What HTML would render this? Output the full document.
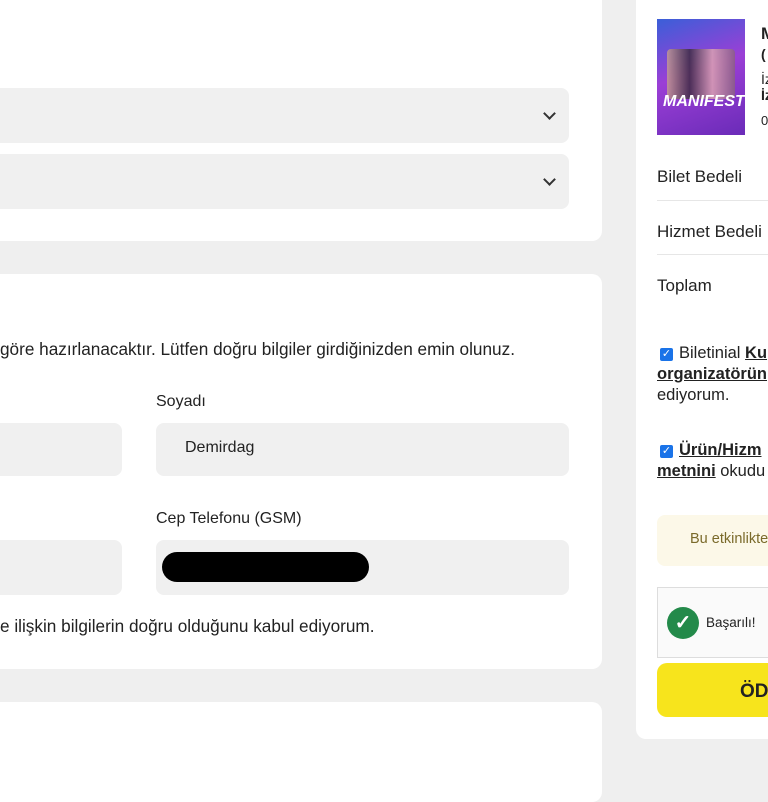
<!DOCTYPE html>
<html><head><meta charset="utf-8"><style>
body{margin:0;width:768px;height:768px;background:#efefef;font-family:"Liberation Sans",Roboto,sans-serif;position:relative;overflow:hidden;color:#222}
.card{position:absolute;background:#fff;border-radius:10px}
.in{position:absolute;background:#f0f0f0;border-radius:8px}
.t{position:absolute;white-space:nowrap}
.chev{position:absolute;width:7px;height:7px;border-right:2px solid #333;border-bottom:2px solid #333;transform:rotate(45deg)}
.cb{display:inline-block;width:13px;height:13px;background:#1a73e8;border-radius:2px;color:#fff;font-size:11px;line-height:13px;text-align:center;vertical-align:1px;margin-right:6px}
hr{position:absolute;border:0;border-top:1px solid #e6e6e6;margin:0}
</style></head><body>
<div class="card" style="left:-20px;top:-20px;width:622px;height:261px"></div>
<div class="in" style="left:-10px;top:88px;width:579px;height:55px"></div>
<div class="chev" style="left:545px;top:109px"></div>
<div class="in" style="left:-10px;top:154px;width:579px;height:55px"></div>
<div class="chev" style="left:545px;top:175px"></div>

<div class="card" style="left:-20px;top:274px;width:622px;height:395px"></div>
<div class="t" style="left:0;top:339px;font-size:17.2px">göre hazırlanacaktır. Lütfen doğru bilgiler girdiğinizden emin olunuz.</div>
<div class="t" style="left:156px;top:393px;font-size:16px">Soyadı</div>
<div class="in" style="left:-10px;top:423px;width:132px;height:53px"></div>
<div class="in" style="left:156px;top:423px;width:413px;height:53px"></div>
<div class="t" style="left:185px;top:439px;font-size:16px">Demirdag</div>
<div class="t" style="left:156px;top:510px;font-size:16px">Cep Telefonu (GSM)</div>
<div class="in" style="left:-10px;top:540px;width:132px;height:55px"></div>
<div class="in" style="left:156px;top:540px;width:413px;height:55px"></div>
<div style="position:absolute;left:162px;top:552px;width:207px;height:30px;background:#000;border-radius:15px"></div>
<div class="t" style="left:0;top:616px;font-size:17.2px">e ilişkin bilgilerin doğru olduğunu kabul ediyorum.</div>

<div class="card" style="left:-20px;top:702px;width:622px;height:100px"></div>

<div class="card" style="left:636px;top:-20px;width:160px;height:759px"></div>
<div style="position:absolute;left:657px;top:19px;width:88px;height:116px;background:linear-gradient(160deg,#3a5fd8 0%,#9b3fd6 45%,#6a2bb8 100%)">
<div style="position:absolute;left:10px;top:30px;width:68px;height:50px;background:linear-gradient(90deg,#c9a090,#3a2a3a,#e0a8b0,#8a6080);opacity:.8;border-radius:4px"></div>
<div style="position:absolute;left:6px;top:74px;color:#fff;font-weight:bold;font-style:italic;font-size:16px">MANIFEST</div></div>
<div class="t" style="left:761px;top:24px;font-size:17px;font-weight:bold">M</div>
<div class="t" style="left:761px;top:46px;font-size:14px;font-weight:bold">(</div>
<div class="t" style="left:761px;top:71px;font-size:14px">İz</div>
<div class="t" style="left:761px;top:87px;font-size:14px;font-weight:bold">İz</div>
<div class="t" style="left:761px;top:113px;font-size:13px">0</div>
<div class="t" style="left:657px;top:167px;font-size:17px">Bilet Bedeli</div>
<hr style="left:657px;top:200px;width:111px">
<div class="t" style="left:657px;top:222px;font-size:17px">Hizmet Bedeli</div>
<hr style="left:657px;top:254px;width:111px">
<div class="t" style="left:657px;top:276px;font-size:17px">Toplam</div>
<div class="t" style="left:660px;top:344px;font-size:16.5px"><span class="cb">✓</span>Biletinial <b><u>Ku</u></b></div>
<div class="t" style="left:657px;top:365px;font-size:16.5px;font-weight:bold"><u>organizatörün</u></div>
<div class="t" style="left:657px;top:386px;font-size:16.5px">ediyorum.</div>
<div class="t" style="left:660px;top:441px;font-size:16.5px"><span class="cb">✓</span><b><u>Ürün/Hizm</u></b></div>
<div class="t" style="left:657px;top:462px;font-size:16.5px"><b><u>metnini</u></b> okudu</div>
<div style="position:absolute;left:657px;top:515px;width:130px;height:51px;background:#fcf8e8;border-radius:8px"></div>
<div class="t" style="left:690px;top:531px;font-size:14.5px;color:#7a6a2a">Bu etkinlikte</div>
<div style="position:absolute;left:657px;top:587px;width:130px;height:69px;background:#fafafa;border:1px solid #ddd"></div>
<div style="position:absolute;left:667px;top:607px;width:32px;height:32px;border-radius:50%;background:#238a4a;color:#fff;text-align:center;line-height:32px;font-size:20px;font-weight:bold">✓</div>
<div class="t" style="left:706px;top:615px;font-size:13.5px">Başarılı!</div>
<div style="position:absolute;left:657px;top:663px;width:130px;height:54px;background:#f7e41c;border-radius:10px"></div>
<div class="t" style="left:740px;top:681px;font-size:19px;font-weight:bold">ÖD</div>
</body></html>
